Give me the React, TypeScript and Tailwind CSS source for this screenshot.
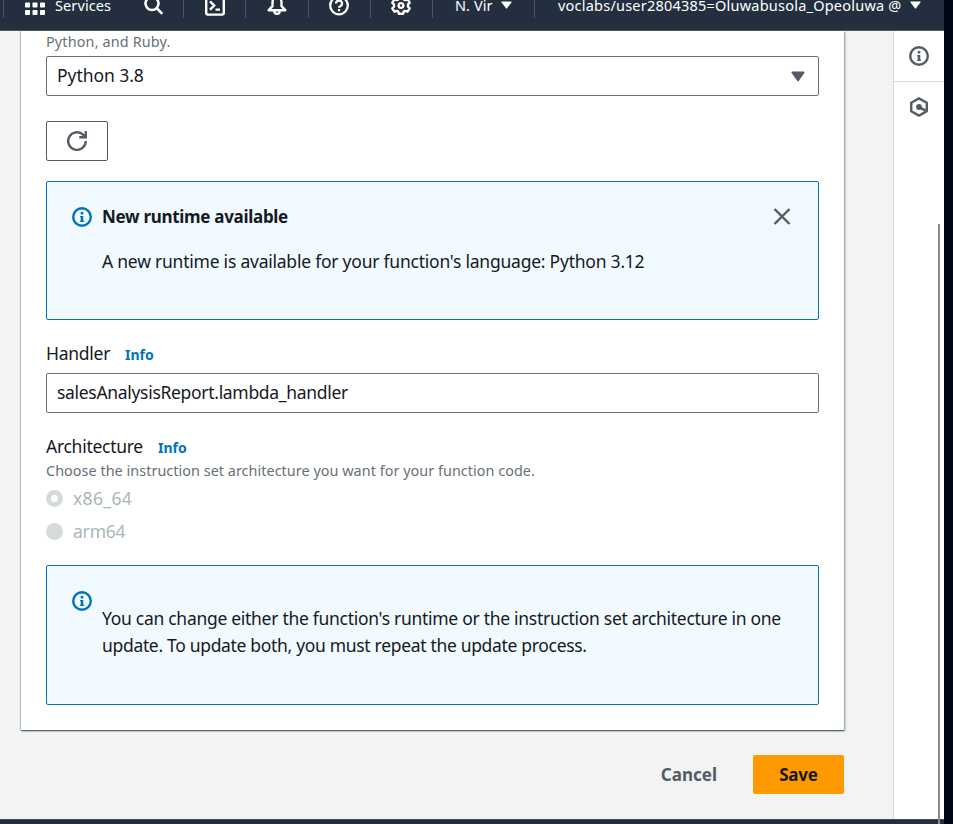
import React from "react";

const InfoIcon = ({ className = "" }: { className?: string }) => (
  <svg viewBox="0 0 20 20" className={`size-5 shrink-0 ${className}`} fill="none" stroke="currentColor" strokeWidth="2.4">
    <circle cx="10" cy="10" r="8.8" />
    <path d="M10 9v5.500M10 5v2.500" strokeWidth="2.6" />
    <path d="M8.200 9.600h2M8.200 14.300h3.800" strokeWidth="1.200" />
  </svg>
);

const Caret = ({ className = "" }: { className?: string }) => (
  <svg viewBox="0 0 14 12" preserveAspectRatio="none" className={`shrink-0 ${className}`} fill="currentColor" stroke="currentColor" strokeWidth="1.600" strokeLinejoin="round">
    <path d="M1.200 1.400h11.600L7 10.600z" />
  </svg>
);

const Divider = ({ className = "" }: { className?: string }) => (
  <span className={`mt-1.5 h-[30px] w-px shrink-0 self-start bg-[#4b5563] ${className}`} />
);

function Header() {
  return (
    <header className="h-[31px] shrink-0 overflow-hidden border-b border-[#545b64] bg-[#232f3e] text-white">
      <div className="-mt-[18px] flex h-12 items-center">
        <Divider className="ml-[3px]" />
        <svg viewBox="0 0 20 20" className="ml-[21px] size-5 shrink-0" fill="currentColor">
          {[0, 7.5, 15].map((y) =>
            [0, 7.5, 15].map((x) => <rect key={`${x}-${y}`} x={x} y={y - 1} width="5" height="5" rx="0.8" />)
          )}
        </svg>
        <span className="-mt-[3px] ml-2.5 w-[58px] shrink-0 whitespace-nowrap text-[14.5px] leading-5 tracking-[0.1px]">Services</span>
        <svg viewBox="0 0 20 20" className="ml-[31px] size-5 shrink-0" fill="none" stroke="currentColor" strokeWidth="2.600">
          <circle cx="8" cy="7.500" r="6.500" />
          <path d="m12.500 12 5.800 5.800" />
        </svg>
        <Divider className="ml-[19px]" />
        <svg viewBox="0 0 20 20" className="ml-[21px] size-5 shrink-0" fill="none" stroke="currentColor" strokeWidth="2.400">
          <rect x="1.200" y="1" width="17.600" height="17.600" rx="1.800" />
          <path d="m5 5.300 4.200 4.200L5 13.700M10.500 13.600H15" />
        </svg>
        <Divider className="ml-5" />
        <svg viewBox="0 0 20 20" className="ml-[21px] size-5 shrink-0" fill="none" stroke="currentColor" strokeWidth="2.400" strokeLinejoin="round">
          <path d="M10 1C6.500 1 5.500 4 5.500 7v3.200L1.700 14.200h16.600l-3.800-4V7c0-3-1-6-4.500-6z" />
          <path d="M7.300 15a2.700 2.900 0 0 0 5.400 0" />
        </svg>
        <Divider className="ml-[21px]" />
        <svg viewBox="0 0 20 20" className="ml-5 size-5 shrink-0" fill="none" stroke="currentColor" strokeWidth="2.300">
          <circle cx="10" cy="9.500" r="8.800" />
          <path d="M7 7.500a3 3 0 1 1 4.300 2.700c-.9.400-1.300.9-1.300 1.600M10 13v2.200" />
        </svg>
        <Divider className="ml-[21px]" />
        <svg viewBox="0 0 20 20" className="ml-5 size-5 shrink-0" fill="none" stroke="currentColor" strokeWidth="2.400" strokeLinejoin="round">
          <path d="M7.800 1.200h4.400l.5 2.200 1.300.7 2.500-.8 2.200 3.400-1.700 1.700v2.200l1.700 1.700-2.200 3.400-2.500-.8-1.300.7-.5 2.200H7.800l-.5-2.200-1.300-.7-2.500.8-2.200-3.400L3 10.600V8.400L1.300 6.700l2.200-3.400 2.500.8 1.300-.7z" />
          <circle cx="10" cy="9.500" r="2.400" />
        </svg>
        <Divider className="ml-[21px]" />
        <span className="-mt-[3px] ml-[22px] w-[39px] shrink-0 whitespace-nowrap text-[14.5px] leading-5 tracking-[0.1px]">N. Vir</span>
        <Caret className="-mt-[2px] ml-[7px] h-2 w-[11px]" />
        <Divider className="ml-[22px]" />
        <span className="-mt-[3px] ml-[23px] w-[346px] shrink-0 whitespace-nowrap text-[14.5px] leading-5 tracking-[0.22px]">voclabs/user2804385=Oluwabusola_Opeoluwa @</span>
        <Caret className="-mt-[2px] ml-[6px] h-2 w-[11px]" />
      </div>
    </header>
  );
}

const InfoLink = () => (
  <a className="mt-0.5 text-[14px] font-bold leading-[22px] text-[#0073bb]">Info</a>
);

function RuntimeCard() {
  return (
    <section className="ml-[21px] h-[699px] w-[823px] shrink-0 bg-white px-[25px] shadow-[0_1px_1px_0_rgba(0,28,36,0.5),1px_1px_2px_0_rgba(0,28,36,0.4),-1px_0_1px_0_rgba(0,28,36,0.15)]">
      <p className="h-[25px] text-[14.4px] leading-[22px] tracking-[0.15px] text-[#687078]">Python, and Ruby.</p>
      <div className="flex h-10 items-center justify-between rounded-[2px] border border-[#687078] px-2.5">
        <span className="mb-0.5 text-[17.5px] tracking-[-0.05px]">Python 3.8</span>
        <Caret className="mr-[3px] h-[11px] w-[14px] text-[#545b64]" />
      </div>
      <button className="mt-[25px] flex h-10 w-[62px] items-center justify-center rounded-[2px] border border-[#545b64] text-[#545b64]">
        <svg viewBox="0 0 20 20" className="size-5" fill="none" stroke="currentColor" strokeWidth="2.400">
          <path d="M18.800 10a8.800 8.800 0 1 1-3-6.600L18 5.500" />
          <path d="M18.800 0v6.200h-6.500" />
        </svg>
      </button>
      <div className="mt-5 flex h-[139px] rounded-[2px] border border-[#0073bb] bg-[#f1faff] pl-[25px] pr-[27px] pt-[25px]">
        <InfoIcon className="text-[#0073bb]" />
        <div className="ml-2.5 grow whitespace-nowrap">
          <h3 className="-mt-[3px] text-[17px] font-bold leading-[26px] tracking-[-0.3px]">New runtime available</h3>
          <p className="mt-[18px] text-[17.5px] leading-[26px] tracking-[-0.23px]">A new runtime is available for your function's language: Python 3.12</p>
        </div>
        <svg viewBox="0 0 18 18" className="size-[18px] shrink-0 text-[#545b64]" fill="none" stroke="currentColor" strokeWidth="2.400">
          <path d="m1.500 2 15 15M16.500 2l-15 15" />
        </svg>
      </div>
      <div className="mt-[21px] flex h-[26px] items-center">
        <span className="mb-0.5 w-[79px] text-[17.5px] tracking-[-0.27px]">Handler</span>
        <InfoLink />
      </div>
      <div className="mt-[6px] flex h-10 items-center rounded-[2px] border border-[#687078] px-2.5 pb-0.5 text-[17.5px] tracking-[-0.31px]">
        salesAnalysisReport.lambda_handler
      </div>
      <div className="mt-[21px] flex h-[26px] items-center">
        <span className="mb-0.5 w-[112px] text-[17.5px] tracking-[-0.28px]">Architecture</span>
        <InfoLink />
      </div>
      <p className="whitespace-nowrap text-[14.4px] leading-[22px] tracking-[0.04px] text-[#687078]">Choose the instruction set architecture you want for your function code.</p>
      <div className="mt-1 flex h-[26px] items-center text-[17.5px] text-[#aab7b8]">
        <span className="mb-px mr-2.5 size-[17px] rounded-full border-[5px] border-[#d5dbdb] bg-white" />
        <span className="mb-0.5 tracking-[0.35px]">x86_64</span>
      </div>
      <div className="mt-[7px] flex h-[26px] items-center text-[17.5px] text-[#aab7b8]">
        <span className="mb-px mr-2.5 size-[17px] rounded-full bg-[#d5dbdb]" />
        <span className="mb-0.5 tracking-[-0.2px]">arm64</span>
      </div>
      <div className="mt-5 flex h-[140px] rounded-[2px] border border-[#0073bb] bg-[#f1faff] pl-[25px] pt-[25px]">
        <InfoIcon className="text-[#0073bb]" />
        <p className="ml-2.5 mt-[14px] whitespace-nowrap text-[17.5px] leading-[27px] tracking-[-0.29px]">
          <span>You can change either the function's runtime or the instruction set architecture in one</span>
          <br />
          <span className="tracking-[-0.32px]">update. To update both, you must repeat the update process.</span>
        </p>
      </div>
    </section>
  );
}

function ToolRail() {
  return (
    <aside className="flex w-[51px] shrink-0 flex-col border-l border-[#d5dbdb] bg-white text-[#545b64]">
      <div className="flex h-[51px] items-center justify-center border-b border-[#d5dbdb]">
        <InfoIcon />
      </div>
      <div className="flex h-[50px] items-center justify-center">
        <svg viewBox="0 0 20 20" className="size-5" fill="none" stroke="currentColor" strokeWidth="2.400" strokeLinejoin="round">
          <path d="M10 1.400 17.800 5.700v8.600L10 18.600 2.200 14.300V5.700z" />
          <path d="m10 10 6.500 3.600" strokeWidth="2.600" />
          <circle cx="10" cy="10" r="2.900" fill="currentColor" stroke="none" />
        </svg>
      </div>
    </aside>
  );
}

export default function App() {
  return (
    <div className="relative h-[824px] w-[953px] overflow-hidden bg-[#000716] font-['Noto_Sans',sans-serif] text-[#16191f]">
      <div className="flex h-full w-[944px] flex-col">
        <Header />
        <div className="flex h-[788px] shrink-0">
          <main className="flex w-[893px] shrink-0 flex-col bg-[#f2f3f3]">
            <RuntimeCard />
            <div className="mt-[25px] flex h-[39px] items-center justify-end pr-[49px] text-[17px] font-bold">
              <button className="mr-9 text-[#545b64]">Cancel</button>
              <button className="h-[39px] w-[91px] rounded-[2px] bg-[#ff9900] tracking-[-0.2px]">Save</button>
            </div>
          </main>
          <ToolRail />
        </div>
        <footer className="h-[5px] shrink-0 border-t border-[#414d5c] bg-[#232f3e]" />
      </div>
      <div className="absolute left-[938px] top-[224px] h-[600px] w-[2px] bg-[#8b8b8b]" />
    </div>
  );
}
